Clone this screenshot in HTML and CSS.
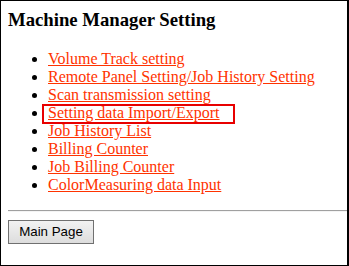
FILE: index.html
```html
<!DOCTYPE html>
<html lang="en">
<head>
    <meta charset="UTF-8">
    <meta name="viewport" content="width=device-width, initial-scale=1.0">
    <title>Machine Manager Setting</title>
    <link rel="stylesheet" href="styles.css">
</head>
<body>
    <div class="frame">
        <h3>Machine Manager Setting</h3>

        <ul class="menu">
            <li><a href="#">Volume Track setting</a></li>
            <li><a href="#">Remote Panel Setting/Job History Setting</a></li>
            <li><a href="#">Scan transmission setting</a></li>
            <li class="marked"><a href="#">Setting data Import/Export</a><span class="mark"></span></li>
            <li><a href="#">Job History List</a></li>
            <li><a href="#">Billing Counter</a></li>
            <li><a href="#">Job Billing Counter</a></li>
            <li><a href="#">ColorMeasuring data Input</a></li>
        </ul>

        <hr>

        <button type="button">Main Page</button>
    </div>
</body>
</html>
```

FILE: styles.css
```css
html, body {
    margin: 0;
    padding: 0;
    background: white;
}
body {
    font-family: "Liberation Serif", "Times New Roman", serif;
    font-size: 16px;
    color: black;
}
.frame {
    box-sizing: border-box;
    min-height: 100vh;
    border: 1px solid black;
    border-right-width: 2px;
    padding: 8px 0 8px 7px;
}
h3 {
    font-size: 18.72px;
    font-weight: bold;
    margin: 0 0 18.72px 0;
}
.menu {
    margin: 16px 0;
    padding-left: 40px;
}
.menu a {
    color: #ff3300;
    text-decoration: underline;
}
.marked {
    position: relative;
}
.mark {
    position: absolute;
    left: -6px;
    top: 0;
    width: 189px;
    height: 16px;
    border: 2px solid #e80000;
}
hr {
    height: 0;
    margin: 8px 0;
    border: 0;
    border-top: 1px solid #a0a0a0;
    border-bottom: 1px solid #f4f4f4;
}
button {
    font-family: "Liberation Sans", Arial, sans-serif;
    font-size: 13.33px;
    color: black;
    width: 86px;
    height: 24px;
    padding: 0;
    border: 1px solid #707070;
    border-radius: 0;
    background: linear-gradient(#f2f2f2, #dddddd);
}
```
